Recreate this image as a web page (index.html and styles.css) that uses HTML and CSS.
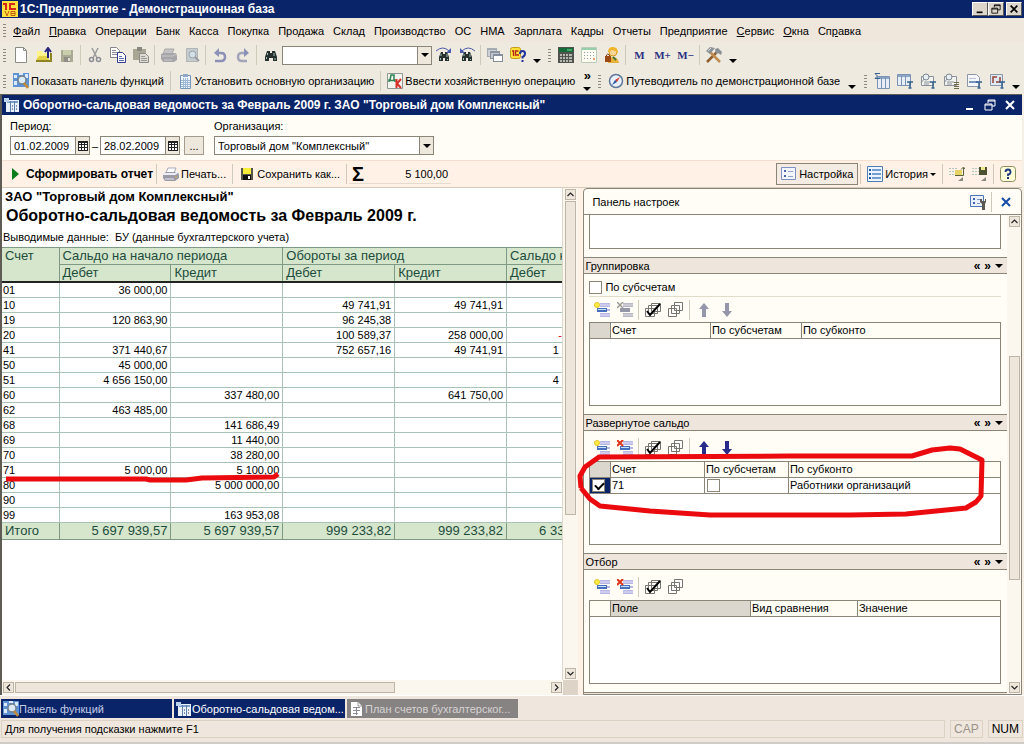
FILE: index.html
```html
<!DOCTYPE html>
<html lang="ru">
<head>
  <meta charset="UTF-8" />
  <meta name="viewport" content="width=device-width, initial-scale=1.0"/>
  <title>1С:Предприятие - Демонстрационная база</title>
  <link rel="stylesheet" href="styles.css">
</head>
<body>
  <!-- icon set -->
  <svg class="sprite" width="0" height="0">
    <symbol id="i-logo" viewBox="0 0 16 16"><rect width="16" height="16" fill="#ffe23c"/><path d="M1 3h3v6M13 3H8v5h6" fill="none" stroke="#d8251c" stroke-width="2"/><path d="M3 10l2 5 2-5M9 10.500h4v4H9zM9 12.500h4" fill="none" stroke="#c05a10"/></symbol>
    <symbol id="i-new" viewBox="0 0 16 16"><path d="M2.500.500h8l3 3v12h-11z" fill="#fff" stroke="#8a8a86"/><path d="M10.500.500v3h3" fill="none" stroke="#8a8a86"/></symbol>
    <symbol id="i-open" viewBox="0 0 16 16"><path d="M1 4h5l1 2h6v7H1z" fill="#fff48c"/><path d="M0 13l3-4h9l1 4z" fill="#e2d04a"/><path d="M0 14h15V6" fill="none" stroke="#8d8422" stroke-width="2"/><path d="M12 11V2M9 5l3-4 3 4" fill="none" stroke="#26267e" stroke-width="2"/></symbol>
    <symbol id="i-save-off" viewBox="0 0 16 16"><path d="M2 3h12v12H2z" fill="#aaa992"/><path d="M4 3h8v5H4z" fill="#c9ceaa"/><path d="M5 10h6v5H5z" fill="#8f8e86"/><path d="M9 11h2v3H9z" fill="#e3e0d3"/></symbol>
    <symbol id="i-save" viewBox="0 0 16 16"><path d="M2 2h12v12H2z" fill="#55554c"/><path d="M4 2h8v6H4z" fill="#f7ee3a"/><path d="M4 9h8v5H4z" fill="#111"/><path d="M9 10h2v3H9z" fill="#fff"/></symbol>
    <symbol id="i-cut" viewBox="0 0 16 16"><path d="M5 1l5 10M11 1L6 11" fill="none" stroke="#9b9b9e" stroke-width="1.500"/><circle cx="4.500" cy="12.500" r="2" fill="none" stroke="#8d8d96" stroke-width="1.500"/><circle cx="11.500" cy="12.500" r="2" fill="none" stroke="#8d8d96" stroke-width="1.500"/></symbol>
    <symbol id="i-copy" viewBox="0 0 16 16"><path d="M.500.500h6l3 3v7h-9z" fill="#fff" stroke="#85858c"/><path d="M2 3.500h4M2 5.500h5M2 7.500h5" stroke="#8a8a94"/><path d="M7.500 5.500h5l3 3v7h-8z" fill="#fff" stroke="#2f3c92"/><path d="M9 9.500h3M9 11.500h5M9 13.500h5" stroke="#5c68b0"/></symbol>
    <symbol id="i-paste" viewBox="0 0 16 16"><path d="M0 2h13v11H0z" fill="#a9a693"/><path d="M4 0h5v4H4z" fill="#888880"/><path d="M6.500 6.500h6l3 3v6h-9z" fill="#dedbd0" stroke="#8b8b8b"/><path d="M8 9.500h4M8 11.500h6M8 13.500h6" stroke="#999"/></symbol>
    <symbol id="i-print-off" viewBox="0 0 16 16"><path d="M4 2h9l-2 5H2z" fill="#c4c4c4" stroke="#aaa"/><path d="M0 7l3-1h12l1 3v4l-3 2H2l-2-3z" fill="#a6a6aa"/><path d="M1 9h11l3-2" stroke="#c9c9cc" fill="none"/><path d="M3 13h8" stroke="#ccc"/></symbol>
    <symbol id="i-print" viewBox="0 0 16 16"><path d="M5 2h8l-2 5H3z" fill="#fff" stroke="#a9a9b8"/><path d="M0 8l3-2h11l2 2v4l-4 3H2l-2-3z" fill="#9b9ba8"/><path d="M0 8h12l3-2" stroke="#ececf4" fill="none" stroke-width="2"/><path d="M2 13h9" stroke="#e8e8ee"/><path d="M12 11h2" stroke="#d4b13b"/></symbol>
    <symbol id="i-preview" viewBox="0 0 16 16"><path d="M2 1h12v14H2z" fill="#c6cbcd"/><path d="M2.500 1.500h11v13h-11z" fill="none" stroke="#b0b5b8"/><circle cx="8.500" cy="7.500" r="3.500" fill="#d2dfe4" stroke="#95a4ad"/><path d="M11 10l4 4" stroke="#9b9ba2" stroke-width="2"/></symbol>
    <symbol id="i-undo" viewBox="0 0 16 16"><path d="M3 14h6q4 0 4-4t-4-4H5" fill="none" stroke="#8d91b7" stroke-width="2.500"/><path d="M7 1v9L2 6z" fill="#8d91b7"/></symbol>
    <symbol id="i-redo" viewBox="0 0 16 16"><path d="M12 14H7q-4 0-4-4t4-4h4" fill="none" stroke="#a3a5ba" stroke-width="2.500"/><path d="M9 1v9l5-4z" fill="#8d91b7"/></symbol>
    <symbol id="i-find" viewBox="0 0 16 16"><path d="M4 4h3v2h2V4h3l2 6v4h-4v-3H8 6v3H2v-4z" fill="#26302e"/><path d="M4.500 6v2M11 6v3M3.500 10v2M12 11v2" stroke="#9fc0b8"/></symbol>
    <symbol id="i-findnext" viewBox="0 0 16 16"><path d="M5 5h2v2h2V5h2l2 5v4H9v-3H7v3H3v-4z" fill="#26302e"/><path d="M5 7v2M11 7v3M4.500 11v2M11.500 12v1" stroke="#9fc0b8"/><path d="M0 4q7-6 13 0" fill="none" stroke="#4a5cab"/><path d="M15 1v5h-5z" fill="#4a5cab"/></symbol>
    <symbol id="i-findprev" viewBox="0 0 16 16"><path d="M5 5h2v2h2V5h2l2 5v4H9v-3H7v3H3v-4z" fill="#26302e"/><path d="M5 7v2M11 7v3M4.500 11v2M11.500 12v1" stroke="#9fc0b8"/><path d="M3 4q6-6 13 0" fill="none" stroke="#4a5cab"/><path d="M1 1v5h5z" fill="#4a5cab"/></symbol>
    <symbol id="i-windows" viewBox="0 0 16 16"><path d="M0 1h10v9H0z" fill="#a5abb3"/><path d="M1 3h8v6H1z" fill="#cdd1d6"/><path d="M3 4h10v8H3z" fill="#8d949f"/><path d="M4 6h8v5H4z" fill="#c3c8ce"/><path d="M6 7h10v8H6z" fill="#858e9c"/><path d="M7 9h8v5H7z" fill="#fff"/></symbol>
    <symbol id="i-help1c" viewBox="0 0 16 16"><rect x=".5" y=".5" width="10" height="11" rx="2" fill="#ffdf3a" stroke="#c59c16"/><path d="M2 4h1.500v5M8.500 4H5.500v4H9" fill="none" stroke="#b4281a" stroke-width="1.300"/><path d="M10 7q0-3 2.500-3T15 6.500 12.500 10v1.500" fill="none" stroke="#20319b" stroke-width="2"/><path d="M11.500 13h2v2h-2z" fill="#20319b"/></symbol>
    <symbol id="i-calc" viewBox="0 0 16 16"><path d="M0 0h16v16H0z" fill="#50534d"/><path d="M1 1h14v4H1z" fill="#146b3a"/><path d="M9 3h5" stroke="#79e08d"/><path d="M2 7h2v2H2zM5 7h2v2H5zM8 7h2v2H8zM11 7h3v2h-3zM2 10h2v2H2zM5 10h2v2H5zM8 10h2v2H8zM11 10h3v2h-3zM2 13h2v2H2zM5 13h2v2H5zM8 13h2v2H8zM11 13h3v2h-3z" fill="#b4b7ae"/></symbol>
    <symbol id="i-cal" viewBox="0 0 16 16"><path d="M.500.500h15v15H.500z" fill="#fffef2" stroke="#b9cbb9"/><path d="M1 2h14" stroke="#97cda9" stroke-width="2"/><path d="M3 5.500h11M3 8.500h11M3 11.500h11" stroke="#8d9cab" stroke-dasharray="1 2"/><path d="M12 11h2v2h-2z" fill="#e9a56c"/></symbol>
    <symbol id="i-user" viewBox="0 0 16 16"><circle cx="9" cy="5" r="4" fill="#f5d69b" stroke="#d99a1a"/><path d="M4 5q0-5 5-5t5 6q-3-3-6-3-2 2-4 2z" fill="#f1b52b"/><path d="M4 16q0-6 5-6t6 6z" fill="#e8b23a"/><path d="M2.500 9V8q1-2 3 0v1" fill="none" stroke="#7c3a10"/><path d="M1 9h6v6H1z" fill="#9c4915"/><path d="M9 10l3 3" stroke="#48793a" stroke-width="2"/></symbol>
    <symbol id="i-tools" viewBox="0 0 16 16"><path d="M1 15L11 5" stroke="#8f5e2e" stroke-width="2.500"/><path d="M9 2l3-1 4 4-1 3-3-2-2 1z" fill="#8a8f96"/><path d="M4 5l10 10" stroke="#c08b4e" stroke-width="2.500"/><path d="M0 4l4-4 5 1-5 6z" fill="#8b9197"/><path d="M2 4l3-3" stroke="#dfe2e4"/></symbol>
    <symbol id="i-panel" viewBox="0 0 16 16"><path d="M0 0h16v14H0z" fill="#5f93d6"/><path d="M1 2h3v3H1zM1 8h3v4H1zM12 1h3v4h-3zM6 0h4v2H6z" fill="#dcebfb"/><circle cx="9" cy="7" r="4" fill="#dbeaf5" stroke="#72808b" stroke-width="1.500"/><path d="M11 10l4 5" stroke="#c18a35" stroke-width="2.500"/></symbol>
    <symbol id="i-org" viewBox="0 0 16 16"><path d="M3.500 2.500h10v13h-10z" fill="#eef4fb" stroke="#7795b8"/><path d="M6 1h5v3H6z" fill="#8ea8c6"/><path d="M6.500 5v10M8.500 5v10M10.500 5v10M4 7.500h9M4 9.500h9M4 11.500h9M4 13.500h9" stroke="#9db8d6"/></symbol>
    <symbol id="i-dk" viewBox="0 0 16 16"><path d="M.500.500h15v15H.500z" fill="#f5f4ef" stroke="#8e9895"/><path d="M2 9V7h1l1-5h3v5h1v2M2 7.500h6" fill="none" stroke="#2c8254" stroke-width="1.500"/><path d="M9.500 6v9M14 6l-4 4.500 4 4.500" fill="none" stroke="#d7322a" stroke-width="2"/></symbol>
    <symbol id="i-compass" viewBox="0 0 16 16"><circle cx="8" cy="8" r="6.500" fill="#eaf1fa" stroke="#60789d" stroke-width="1.500"/><path d="M12 4L9 9 7 7z" fill="#d33c2c"/><path d="M4 12l3-5 2 2z" fill="#2a58a8"/></symbol>
    <symbol id="i-rep" viewBox="0 0 16 16"><path d="M3.500 3.500h12v12h-12z" fill="#e7eef6" stroke="#7b93b0"/><path d="M4 5h11" stroke="#8ba7c9" stroke-width="2"/><path d="M7.500 4v11M11.500 4v11" stroke="#7b93b0"/><path d="M6 .500H1L3.500 3 1 5.500h5" fill="none" stroke="#35608f"/></symbol>
    <symbol id="i-rept" viewBox="0 0 16 16"><path d="M.500 1.500h13v11H.500z" fill="#e7eef6" stroke="#7b93b0"/><path d="M1 3h12" stroke="#8ba7c9" stroke-width="2"/><path d="M4.500 3v9M8.500 3v9" stroke="#7b93b0"/><path d="M10 9h6M13 9v6M11.500 15h3" fill="none" stroke="#35608f" stroke-width="1.500"/></symbol>
    <symbol id="i-docq" viewBox="0 0 16 16"><path d="M1.500 3.500h12v9h-12z" fill="#f3f3ef" stroke="#8b929b"/><circle cx="6" cy="4" r="3" fill="#e8eef2" stroke="#7e8791"/><path d="M4 6l-3 4M4 9h7M4 11h5" stroke="#8b929b"/><path d="M10 9h6M13 9v6M11.500 15h3" fill="none" stroke="#35608f" stroke-width="1.500"/></symbol>
    <symbol id="i-docl" viewBox="0 0 16 16"><path d="M1.500 3.500h12v9h-12z" fill="#f3f3ef" stroke="#8b929b"/><circle cx="6" cy="4" r="3" fill="#e8eef2" stroke="#7e8791"/><path d="M4 6l-3 4M4 9h7M4 11h5" stroke="#8b929b"/><path d="M11 9.500h5M11 11.500h5M11 13.500h5M11 15.500h5" stroke="#6c6c4c"/></symbol>
    <symbol id="i-doct" viewBox="0 0 16 16"><path d="M1.500 1.500h9l3 3v9h-12z" fill="#f5f7fa" stroke="#8b96a6"/><path d="M3 9h9" stroke="#7694bd" stroke-width="2"/><path d="M3 5.500h7" stroke="#b7c4d4"/><path d="M10 9h6M13 9v6M11.500 15h3" fill="none" stroke="#35608f" stroke-width="1.500"/></symbol>
    <symbol id="i-docr" viewBox="0 0 16 16"><path d="M1.500 1.500h12v11h-12z" fill="#dfe9f4" stroke="#8b96a6"/><path d="M4 10V4h4M11 4v5H7" fill="none" stroke="#9a4133" stroke-width="1.500"/><path d="M10 9h6M13 9v6M11.500 15h3" fill="none" stroke="#35608f" stroke-width="1.500"/></symbol>
    <symbol id="i-sheet" viewBox="0 0 16 16"><path d="M2 3h13v12H2z" fill="#eaf1fa"/><path d="M3 5h11" stroke="#7ba0d0" stroke-width="2"/><path d="M6.500 4v11M10.500 4v11" stroke="#5d7fae"/><path d="M0 1h5v4H0z" fill="#bcd3ee"/><path d="M8 9h1M12 9h1M8 12h1M12 12h1" stroke="#1c2f60"/></symbol>
    <symbol id="i-doc" viewBox="0 0 16 16"><path d="M2 1h7l4 4v10H2z" fill="#fff"/><path d="M4 6.500h7M4 9.500h7M4 12.500h5M7.500 6v8" stroke="#8d8d98"/><path d="M9 1v4h4" fill="none" stroke="#999"/></symbol>
    <symbol id="i-form" viewBox="0 0 16 16"><path d="M.500 1.500h14v12H.500z" fill="#f3f6ff" stroke="#7e90c4"/><path d="M3 4h2v2H3zM3 9h2v2H3z" fill="#4c64ae"/><path d="M7 5.500h5M7 10.500h5" stroke="#93a2cc"/></symbol>
    <symbol id="i-history" viewBox="0 0 16 16"><path d="M.500.500h15v15H.500z" fill="#edf5ff" stroke="#4e7cb4"/><path d="M2 4h2M2 8h2M2 12h2" stroke="#205a9e" stroke-width="2"/><path d="M5 4h9M5 8h9M5 12h9" stroke="#4c83bf" stroke-width="1.500"/></symbol>
    <symbol id="i-load" viewBox="0 0 16 16"><path d="M0 2.500h8M0 5.500h8M0 8.500h8" stroke="#b3c6c0" stroke-dasharray="2 1"/><path d="M6 4h7v5H6z" fill="#e5d463"/><path d="M6 9.500h8.500V2M12 3.500L14.500 1 16 3" fill="none" stroke="#57603a"/><path d="M14 11v4h-5z" fill="#8a877c"/></symbol>
    <symbol id="i-store" viewBox="0 0 16 16"><path d="M0 2.500h8M0 5.500h8M0 8.500h8" stroke="#b3c6c0" stroke-dasharray="2 1"/><path d="M7 1h8v8H7z" fill="#4f5230"/><path d="M9 1h4v3H9z" fill="#eee98d"/><path d="M14 11v4h-5z" fill="#8a877c"/></symbol>
    <symbol id="i-q" viewBox="0 0 16 16"><rect x=".5" y=".5" width="15" height="15" rx="3" fill="#ffffd9" stroke="#8c8a60"/><path d="M5.500 6q0-2.500 2.500-2.500T10.500 6 8 8.500V10" fill="none" stroke="#1f3a7e" stroke-width="1.800"/><path d="M7 11h2v2H7z" fill="#1f3a7e"/></symbol>
    <symbol id="i-add" viewBox="0 0 16 16"><path d="M6 1h10v4H6zM6 11h10v4H6z" fill="#b6b5e4"/><path d="M6 3h10M6 13h10" stroke="#e4e3f8"/><path d="M3 6h10v4H3z" fill="#466fbe"/><path d="M4 7.500h8" stroke="#c8e2f7"/><path d="M13 7h3v2h-3z" fill="#b6b5e4"/><circle cx="3" cy="3" r="2.500" fill="#ffee43" stroke="#e6c22c"/></symbol>
    <symbol id="i-del" viewBox="0 0 16 16"><path d="M6 1h10v4H6zM6 11h10v4H6z" fill="#b6b5e4"/><path d="M6 3h10M6 13h10" stroke="#e4e3f8"/><path d="M3 6h10v4H3z" fill="#466fbe"/><path d="M4 7.500h8" stroke="#c8e2f7"/><path d="M13 7h3v2h-3z" fill="#b6b5e4"/><path d="M0 0l6 6M6 0L0 6" stroke="#de3417" stroke-width="2"/></symbol>
    <symbol id="i-del-off" viewBox="0 0 16 16"><path d="M6 1h10v4H6zM6 11h10v4H6z" fill="#b8b7c4"/><path d="M6 3h10M6 13h10" stroke="#dedde2"/><path d="M3 6h10v4H3z" fill="#9797aa"/><path d="M0 0l6 6M6 0L0 6" stroke="#9b9a93" stroke-width="1.500"/></symbol>
    <symbol id="i-checkall" viewBox="0 0 16 16"><path d="M6.500 1.500h9v8h-9zM3.500 3.500h9v8h-9zM.500 6.500h9v8h-9z" fill="#fff" stroke="#77756c"/><path d="M2 9l3 4L15 2" fill="none" stroke="#000" stroke-width="2"/></symbol>
    <symbol id="i-uncheck" viewBox="0 0 16 16"><path d="M6.500.500h8v8h-8zM3.500 3.500h8v8h-8zM.500 6.500h8v8h-8z" fill="#fff" stroke="#77756c"/></symbol>
    <symbol id="i-up" viewBox="0 0 16 16"><path d="M8 1l5 6h-3v8H6V7H3z" fill="currentColor"/></symbol>
    <symbol id="i-down" viewBox="0 0 16 16"><path d="M8 15l5-6h-3V1H6v8H3z" fill="currentColor"/></symbol>
    <symbol id="i-setup" viewBox="0 0 16 16"><path d="M.500 1.500h13v11H.500z" fill="#eaf0fc" stroke="#4d76b8"/><path d="M3 4h2v2H3zM3 8h2v2H3z" fill="#3d63ae"/><path d="M7 5.500h4M7 9.500h3" stroke="#7d97c8"/><path d="M10 5v3l2 2v6h3v-6l1-2V5h-1v2h-3V5z" fill="#5b5b55"/></symbol>
    <symbol id="i-pick" viewBox="0 0 10 10"><path d="M0 0h10v10H0z" fill="#222"/><path d="M1 2h2v1H1zM4 2h2v1H4zM7 2h2v1H7zM1 4h2v2H1zM4 4h2v2H4zM7 4h2v2H7zM1 7h2v2H1zM4 7h2v2H4zM7 7h2v2H7z" fill="#fff"/></symbol>
    <symbol id="i-min" viewBox="0 0 12 12"><path d="M2 9h7v2H2z" fill="currentColor"/></symbol>
    <symbol id="i-restore" viewBox="0 0 12 12"><path d="M4 4V1h7v6H8M4 2h7M1 5h7v6H1zM1 6h7" fill="none" stroke="currentColor"/></symbol>
    <symbol id="i-close" viewBox="0 0 12 12"><path d="M2 2l8 8M10 2l-8 8" stroke="currentColor" stroke-width="2"/></symbol>
    <symbol id="i-chev" viewBox="0 0 12 12"><path d="M2 8l4-4 4 4" fill="none" stroke="#222" stroke-width="1.500"/></symbol>
  </svg>

  <header class="titlebar">
    <svg class="icon"><use href="#i-logo"/></svg>
    <h1>1С:Предприятие - Демонстрационная база</h1>
    <div class="win-buttons raised">
      <button aria-label="Свернуть"><svg><use href="#i-min"/></svg></button>
      <button aria-label="Восстановить"><svg><use href="#i-restore"/></svg></button>
      <button aria-label="Закрыть"><svg><use href="#i-close"/></svg></button>
    </div>
  </header>

  <nav class="menubar">
    <span class="grip"></span>
    <button><u>Ф</u>айл</button>
    <button><u>П</u>равка</button>
    <button>Операции</button>
    <button>Банк</button>
    <button>Касса</button>
    <button>Покупка</button>
    <button>Продажа</button>
    <button>Склад</button>
    <button>Производство</button>
    <button>ОС</button>
    <button>НМА</button>
    <button>Зарплата</button>
    <button>Кадры</button>
    <button>Отчеты</button>
    <button>Предприятие</button>
    <button><u>С</u>ервис</button>
    <button><u>О</u>кна</button>
    <button>Сп<u>р</u>авка</button>
  </nav>

  <div class="toolbar">
    <span class="grip"></span>
    <button class="tool" aria-label="Новый"><svg class="icon"><use href="#i-new"/></svg></button>
    <button class="tool" aria-label="Открыть"><svg class="icon"><use href="#i-open"/></svg></button>
    <button class="tool" aria-label="Сохранить"><svg class="icon"><use href="#i-save-off"/></svg></button>
    <span class="sep"></span>
    <button class="tool" aria-label="Вырезать"><svg class="icon"><use href="#i-cut"/></svg></button>
    <button class="tool" aria-label="Копировать"><svg class="icon"><use href="#i-copy"/></svg></button>
    <button class="tool" aria-label="Вставить"><svg class="icon"><use href="#i-paste"/></svg></button>
    <span class="sep"></span>
    <button class="tool" aria-label="Печать"><svg class="icon"><use href="#i-print-off"/></svg></button>
    <button class="tool" aria-label="Просмотр"><svg class="icon"><use href="#i-preview"/></svg></button>
    <span class="sep"></span>
    <button class="tool" aria-label="Отменить"><svg class="icon"><use href="#i-undo"/></svg></button>
    <button class="tool" aria-label="Вернуть"><svg class="icon"><use href="#i-redo"/></svg></button>
    <span class="sep"></span>
    <button class="tool" aria-label="Найти"><svg class="icon"><use href="#i-find"/></svg></button>
    <div class="field search">
      <input type="text" aria-label="Строка поиска">
      <button aria-label="Выбрать"><span class="arrow"></span></button>
    </div>
    <button class="tool" aria-label="Найти следующий"><svg class="icon"><use href="#i-findnext"/></svg></button>
    <button class="tool" aria-label="Найти предыдущий"><svg class="icon"><use href="#i-findprev"/></svg></button>
    <span class="sep"></span>
    <button class="tool" aria-label="Окна"><svg class="icon"><use href="#i-windows"/></svg></button>
    <button class="tool" aria-label="Справка"><svg class="icon"><use href="#i-help1c"/></svg></button>
    <button class="more" aria-label="Еще"><span class="arrow"></span></button>
    <span class="grip"></span>
    <button class="tool" aria-label="Калькулятор"><svg class="icon"><use href="#i-calc"/></svg></button>
    <button class="tool" aria-label="Календарь"><svg class="icon"><use href="#i-cal"/></svg></button>
    <button class="tool" aria-label="Пользователь"><svg class="icon"><use href="#i-user"/></svg></button>
    <span class="sep"></span>
    <button class="tool memory">M</button>
    <button class="tool memory">M+</button>
    <button class="tool memory">M−</button>
    <span class="sep"></span>
    <button class="tool" aria-label="Настройка"><svg class="icon"><use href="#i-tools"/></svg></button>
    <button class="more" aria-label="Еще"><span class="arrow"></span></button>
  </div>

  <div class="toolbar">
    <span class="grip"></span>
    <button class="text-tool"><svg class="icon"><use href="#i-panel"/></svg>Показать панель функций</button>
    <span class="sep"></span>
    <button class="text-tool"><svg class="icon"><use href="#i-org"/></svg>Установить основную организацию</button>
    <span class="sep"></span>
    <button class="text-tool"><svg class="icon"><use href="#i-dk"/></svg>Ввести хозяйственную операцию</button>
    <button class="more double" aria-label="Еще"><b>»</b><span class="arrow"></span></button>
    <span class="grip"></span>
    <button class="text-tool"><svg class="icon"><use href="#i-compass"/></svg>Путеводитель по демонстрационной базе</button>
    <button class="more" aria-label="Еще"><span class="arrow"></span></button>
    <div class="reports">
      <span class="grip"></span>
      <button class="tool" aria-label="Оборотно-сальдовая ведомость"><svg class="icon"><use href="#i-rep"/></svg></button>
      <button class="tool" aria-label="Ведомость по счету"><svg class="icon"><use href="#i-rept"/></svg></button>
      <button class="tool" aria-label="Анализ счета"><svg class="icon"><use href="#i-docq"/></svg></button>
      <button class="tool" aria-label="Анализ субконто"><svg class="icon"><use href="#i-docl"/></svg></button>
      <button class="tool" aria-label="Карточка счета"><svg class="icon"><use href="#i-doct"/></svg></button>
      <button class="tool" aria-label="Обороты счета"><svg class="icon"><use href="#i-docr"/></svg></button>
      <button class="more" aria-label="Еще"><span class="arrow"></span></button>
    </div>
  </div>

  <main class="window">
    <div class="window-title">
      <svg class="icon"><use href="#i-sheet"/></svg>
      <h2>Оборотно-сальдовая ведомость за Февраль 2009 г. ЗАО "Торговый дом Комплексный"</h2>
      <div class="win-buttons">
        <button aria-label="Свернуть"><svg><use href="#i-min"/></svg></button>
        <button aria-label="Восстановить"><svg><use href="#i-restore"/></svg></button>
        <button aria-label="Закрыть"><svg><use href="#i-close"/></svg></button>
      </div>
    </div>

    <form class="params">
      <div class="param">
        <label for="dateFrom">Период:</label>
        <div class="row">
          <div class="field date"><input type="text" id="dateFrom" value="01.02.2009"><button type="button" aria-label="Выбрать дату"><svg><use href="#i-pick"/></svg></button></div>
          <span class="dash">–</span>
          <div class="field date"><input type="text" aria-label="Конец периода" value="28.02.2009"><button type="button" aria-label="Выбрать дату"><svg><use href="#i-pick"/></svg></button></div>
          <button type="button" class="dots">...</button>
        </div>
      </div>
      <div class="param">
        <label for="org">Организация:</label>
        <div class="field org">
          <select id="org"><option>Торговый дом "Комплексный"</option></select>
          <span class="drop"><span class="arrow"></span></span>
        </div>
      </div>
    </form>

    <div class="actions">
      <button class="run"><span class="play"></span>Сформировать отчет</button>
      <span class="sep"></span>
      <button class="text-tool"><svg class="icon"><use href="#i-print"/></svg>Печать...</button>
      <span class="sep"></span>
      <button class="text-tool"><svg class="icon"><use href="#i-save"/></svg>Сохранить как...</button>
      <span class="sep"></span>
      <div class="sum"><b>Σ</b><output>5 100,00</output></div>
      <div class="actions-right">
        <button class="text-tool pressed"><svg class="icon"><use href="#i-form"/></svg>Настройка</button>
        <span class="sep"></span>
        <button class="text-tool"><svg class="icon"><use href="#i-history"/></svg>История<span class="arrow small"></span></button>
        <span class="sep"></span>
        <button class="tool" aria-label="Загрузить настройки"><svg class="icon"><use href="#i-load"/></svg></button>
        <button class="tool" aria-label="Сохранить настройки"><svg class="icon"><use href="#i-store"/></svg></button>
        <span class="sep"></span>
        <button class="tool" aria-label="Справка"><svg class="icon"><use href="#i-q"/></svg></button>
      </div>
    </div>

    <div class="content">
      <section class="report">
        <div class="report-view">
          <p class="org-name">ЗАО "Торговый дом Комплексный"</p>
          <h3>Оборотно-сальдовая ведомость за Февраль 2009 г.</h3>
          <p class="report-info">Выводимые данные:&nbsp; БУ (данные бухгалтерского учета)</p>
          <table class="sheet">
            <colgroup><col class="c-acc"><col><col><col><col><col></colgroup>
            <thead>
              <tr><th rowspan="2">Счет</th><th colspan="2">Сальдо на начало периода</th><th colspan="2">Обороты за период</th><th>Сальдо на конец</th></tr>
              <tr><th>Дебет</th><th>Кредит</th><th>Дебет</th><th>Кредит</th><th>Дебет</th></tr>
            </thead>
            <tbody>
              <tr><td>01</td><td>36 000,00</td><td></td><td></td><td></td><td></td></tr>
              <tr><td>10</td><td></td><td></td><td>49 741,91</td><td>49 741,91</td><td></td></tr>
              <tr><td>19</td><td>120 863,90</td><td></td><td>96 245,38</td><td></td><td></td></tr>
              <tr><td>20</td><td></td><td></td><td>100 589,37</td><td>258 000,00</td><td class="minus">-157 410,63</td></tr>
              <tr><td>41</td><td>371 440,67</td><td></td><td>752 657,16</td><td>49 741,91</td><td>1 074 355,92</td></tr>
              <tr><td>50</td><td>45 000,00</td><td></td><td></td><td></td><td></td></tr>
              <tr><td>51</td><td>4 656 150,00</td><td></td><td></td><td></td><td>4 656 150,00</td></tr>
              <tr><td>60</td><td></td><td>337 480,00</td><td></td><td>641 750,00</td><td></td></tr>
              <tr><td>62</td><td>463 485,00</td><td></td><td></td><td></td><td></td></tr>
              <tr><td>68</td><td></td><td>141 686,49</td><td></td><td></td><td></td></tr>
              <tr><td>69</td><td></td><td>11 440,00</td><td></td><td></td><td></td></tr>
              <tr><td>70</td><td></td><td>38 280,00</td><td></td><td></td><td></td></tr>
              <tr><td>71</td><td>5 000,00</td><td>5 100,00</td><td></td><td></td><td></td></tr>
              <tr><td>80</td><td></td><td>5 000 000,00</td><td></td><td></td><td></td></tr>
              <tr><td>90</td><td></td><td></td><td></td><td></td><td></td></tr>
              <tr><td>99</td><td></td><td>163 953,08</td><td></td><td></td><td></td></tr>
            </tbody>
            <tfoot>
              <tr><td>Итого</td><td>5 697 939,57</td><td>5 697 939,57</td><td>999 233,82</td><td>999 233,82</td><td>6 339 689,57</td></tr>
            </tfoot>
          </table>
        </div>
        <div class="scroll vertical report-v">
          <button aria-label="Вверх"><svg><use href="#i-chev"/></svg></button>
          <span class="thumb"></span>
          <button class="end down" aria-label="Вниз"><svg><use href="#i-chev"/></svg></button>
        </div>
        <div class="scroll horizontal">
          <button class="left" aria-label="Влево"><svg><use href="#i-chev"/></svg></button>
          <span class="thumb"></span>
          <button class="end right" aria-label="Вправо"><svg><use href="#i-chev"/></svg></button>
        </div>
        <span class="corner"></span>
      </section>

      <aside class="settings">
        <div class="settings-head">
          <h3>Панель настроек</h3>
          <button class="tool" aria-label="Настроить"><svg class="icon"><use href="#i-setup"/></svg></button>
          <span class="sep"></span>
          <button class="tool blue" aria-label="Закрыть панель"><svg width="12" height="12"><use href="#i-close"/></svg></button>
        </div>
        <div class="settings-body">
          <div class="sections">
            <div class="list-stub"></div>

            <div class="section-head"><h4>Группировка</h4><span class="section-nav"><b>«</b><b>»</b><span class="arrow"></span></span></div>
            <label class="check-line"><input type="checkbox">По субсчетам</label>
            <div class="mini-tools">
              <button class="tool" aria-label="Добавить"><svg class="icon"><use href="#i-add"/></svg></button>
              <button class="tool" aria-label="Удалить"><svg class="icon"><use href="#i-del-off"/></svg></button>
              <span class="sep"></span>
              <button class="tool" aria-label="Отметить все"><svg class="icon"><use href="#i-checkall"/></svg></button>
              <button class="tool" aria-label="Снять отметки"><svg class="icon"><use href="#i-uncheck"/></svg></button>
              <span class="sep"></span>
              <button class="tool muted" aria-label="Выше"><svg class="icon"><use href="#i-up"/></svg></button>
              <button class="tool muted" aria-label="Ниже"><svg class="icon"><use href="#i-down"/></svg></button>
            </div>
            <div class="list">
              <table>
                <colgroup><col class="w-mark"><col class="w-100"><col class="w-91"><col></colgroup>
                <tr><th class="current"></th><th>Счет</th><th>По субсчетам</th><th>По субконто</th></tr>
              </table>
            </div>

            <div class="section-head"><h4>Развернутое сальдо</h4><span class="section-nav"><b>«</b><b>»</b><span class="arrow"></span></span></div>
            <div class="mini-tools spaced">
              <button class="tool" aria-label="Добавить"><svg class="icon"><use href="#i-add"/></svg></button>
              <button class="tool" aria-label="Удалить"><svg class="icon"><use href="#i-del"/></svg></button>
              <span class="sep"></span>
              <button class="tool" aria-label="Отметить все"><svg class="icon"><use href="#i-checkall"/></svg></button>
              <button class="tool" aria-label="Снять отметки"><svg class="icon"><use href="#i-uncheck"/></svg></button>
              <span class="sep"></span>
              <button class="tool navy" aria-label="Выше"><svg class="icon"><use href="#i-up"/></svg></button>
              <button class="tool navy" aria-label="Ниже"><svg class="icon"><use href="#i-down"/></svg></button>
            </div>
            <div class="list">
              <table>
                <colgroup><col class="w-mark"><col class="w-94"><col class="w-84"><col></colgroup>
                <tr><th class="current"></th><th>Счет</th><th>По субсчетам</th><th>По субконто</th></tr>
                <tr><td class="selected"><input type="checkbox" aria-label="Использовать" checked></td><td>71</td><td><input type="checkbox" aria-label="По субсчетам"></td><td>Работники организаций</td></tr>
              </table>
            </div>

            <div class="section-head"><h4>Отбор</h4><span class="section-nav"><b>«</b><b>»</b><span class="arrow"></span></span></div>
            <div class="mini-tools spaced">
              <button class="tool" aria-label="Добавить"><svg class="icon"><use href="#i-add"/></svg></button>
              <button class="tool" aria-label="Удалить"><svg class="icon"><use href="#i-del"/></svg></button>
              <span class="sep"></span>
              <button class="tool" aria-label="Отметить все"><svg class="icon"><use href="#i-checkall"/></svg></button>
              <button class="tool" aria-label="Снять отметки"><svg class="icon"><use href="#i-uncheck"/></svg></button>
            </div>
            <div class="list">
              <table>
                <colgroup><col class="w-mark"><col class="w-140"><col class="w-107"><col></colgroup>
                <tr><th></th><th class="current">Поле</th><th>Вид сравнения</th><th>Значение</th></tr>
              </table>
            </div>
            <div class="section-head"></div>
          </div>
          <div class="scroll vertical settings-v">
            <button aria-label="Вверх"><svg><use href="#i-chev"/></svg></button>
            <span class="thumb"></span>
            <button class="end down" aria-label="Вниз"><svg><use href="#i-chev"/></svg></button>
          </div>
        </div>
      </aside>
    </div>
  </main>

  <div class="taskbar">
    <button><svg class="icon"><use href="#i-panel"/></svg><span>Панель функций</span></button>
    <button class="active"><svg class="icon"><use href="#i-sheet"/></svg><span>Оборотно-сальдовая ведом...</span></button>
    <button class="inactive"><svg class="icon"><use href="#i-doc"/></svg><span>План счетов бухгалтерског...</span></button>
  </div>

  <footer class="statusbar">
    <span class="hint">Для получения подсказки нажмите F1</span>
    <span class="key off">CAP</span>
    <span class="key">NUM</span>
  </footer>

  <!-- red pen marks -->
  <svg class="marks" width="1024" height="744" viewBox="0 0 1024 744">
    <path d="M6 479H146L150 480H186L202 478L274 477L278 474"/>
    <path d="M581 488L580 476L585 467L599 457L790 456H912L932 450L950 448L960 449L982 460L981 496L976 502L966 508L906 514L850 515H710L650 511L600 506L590 499L581 488"/>
  </svg>
</body>
</html>
```

FILE: styles.css
```css
* {
  box-sizing: border-box;
}

html, body {
  height: 100%;
  margin: 0;
}

body {
  display: flex;
  flex-direction: column;
  overflow: hidden;
  font-family: "Liberation Sans", Arial, sans-serif;
  font-size: 11px;
  line-height: 14px;
  color: #000;
  background: #efe7dd;
}

h1, h2, h3, h4, p {
  margin: 0;
}

button, input, select {
  font: inherit;
  color: inherit;
  border: 0;
  padding: 0;
  margin: 0;
  background: none;
  border-radius: 0;
}

button {
  white-space: nowrap;
}

svg {
  display: block;
  flex: none;
}

.sprite {
  position: absolute;
}

.icon {
  width: 16px;
  height: 16px;
}

.arrow {
  flex: none;
  width: 0;
  height: 0;
  border: 4px solid transparent;
  border-top-color: #000;
  border-bottom: 0;
}

.arrow.small {
  border-width: 3px;
  border-bottom: 0;
}

.grip {
  flex: none;
  width: 3px;
  height: 13px;
  margin: 0 3px;
  background: repeating-linear-gradient(#8f897f 0 1px, transparent 1px 3px);
}

.sep {
  flex: none;
  width: 1px;
  height: 20px;
  margin: 0 2px;
  background: #cfc9ba;
}

/* main title */
.titlebar, .window-title {
  display: flex;
  align-items: center;
  flex: none;
  gap: 2px;
  height: 18px;
  padding: 0 2px;
  background: #0a246a;
  color: #fff;
}

.titlebar h1, .window-title h2 {
  flex: 1;
  font-size: 12px;
  font-weight: bold;
  line-height: 16px;
  white-space: nowrap;
}

.win-buttons {
  display: flex;
}

.win-buttons button {
  display: flex;
  align-items: center;
  justify-content: center;
  width: 20px;
  height: 14px;
}

.win-buttons svg {
  width: 12px;
  height: 12px;
}

.raised button {
  width: 16px;
  background: #dcd6cb;
  color: #000;
  border: 1px solid;
  border-color: #fff #555 #555 #fff;
}

.raised button:last-child {
  margin-left: 2px;
}

.raised svg {
  width: 10px;
  height: 10px;
}

/* menu and toolbars */
.menubar {
  display: flex;
  align-items: center;
  flex: none;
  height: 24px;
  padding-top: 1px;
  background: #efe6dc;
}

.menubar button {
  padding: 0 5px 0 4px;
}

.toolbar {
  display: flex;
  align-items: center;
  flex: none;
  height: 26px;
  background: #eeeadf;
}

.tool {
  display: flex;
  align-items: center;
  justify-content: center;
  flex: none;
  width: 23px;
  height: 22px;
}

.memory {
  font-family: "Liberation Serif", serif;
  font-weight: bold;
  color: #2b2f83;
}

.text-tool {
  display: flex;
  align-items: center;
  flex: none;
  gap: 2px;
  height: 22px;
  padding: 0 4px;
}

.more {
  display: flex;
  flex-direction: column;
  align-items: center;
  justify-content: flex-end;
  flex: none;
  width: 16px;
  height: 16px;
}

.more.double {
  justify-content: space-between;
  height: 20px;
  font-size: 13px;
  line-height: 10px;
}

.reports {
  display: flex;
  align-items: center;
  margin-left: auto;
}

.field {
  display: flex;
  flex: none;
  height: 19px;
  border: 1px solid #8b8578;
  background: #fff;
}

.field input {
  flex: 1;
  min-width: 0;
  padding: 0 3px;
}

.field button, .drop {
  display: flex;
  align-items: center;
  justify-content: center;
  width: 14px;
  background: #eee7dc;
  border-left: 1px solid #8b8578;
}

.search {
  width: 150px;
}

/* report window */
.window {
  display: flex;
  flex-direction: column;
  flex: 1;
  min-height: 0;
  border-left: 2px solid #5f5b55;
  border-right: 2px solid #f5efe6;
  background: #fffdf6;
}

.window-title {
  height: 21px;
  border-top: 1px solid #5f5b55;
}

.window-title h2 {
  padding-left: 1px;
}

.window-title button {
  height: 16px;
}

.params {
  display: flex;
  flex: none;
  gap: 10px;
  height: 45px;
  padding: 4px 8px 0;
}

.param label {
  display: block;
  margin-bottom: 3px;
}

.row {
  display: flex;
  align-items: center;
}

.date {
  width: 80px;
}

.date svg {
  width: 10px;
  height: 10px;
}

.dash {
  width: 10px;
  text-align: center;
}

.dots {
  width: 20px;
  height: 19px;
  margin-left: 4px;
  border: 1px solid #a39c8f;
  background: #eee7dc;
}

.org {
  width: 220px;
}

.org select {
  flex: 1;
  appearance: none;
  padding: 0 3px;
}

.actions {
  display: flex;
  align-items: center;
  flex: none;
  height: 28px;
  border-top: 1px solid #f5dfd0;
  border-bottom: 1px solid #d8cdbd;
  background: #fff1e6;
}

.run {
  display: flex;
  align-items: center;
  gap: 7px;
  padding: 0 1px 0 10px;
  font-size: 12px;
  font-weight: bold;
}

.play {
  border: 6px solid transparent;
  border-left: 7px solid #0b7d1c;
  border-right: 0;
}

.sum {
  display: flex;
  align-items: center;
  justify-content: space-between;
  width: 102px;
  height: 20px;
  padding: 0 3px;
  border-bottom: 1px solid #e5dace;
}

.sum b {
  font-size: 20px;
}

.actions-right {
  display: flex;
  align-items: center;
  margin-left: auto;
  padding-right: 3px;
}

.pressed {
  border: 1px solid #8b8578;
  background: #f4ece2;
}

.content {
  display: flex;
  flex: 1;
  gap: 5px;
  min-height: 0;
  background: #fff1e6;
}

.report {
  display: grid;
  flex: 1;
  grid-template-columns: 1fr 15px;
  grid-template-rows: 1fr 15px;
  min-width: 0;
}

.report-view {
  overflow: hidden;
  background: #fff;
  border-right: 1px solid #ddd8cc;
}

.org-name {
  padding: 1px 3px 0;
  font-size: 13px;
  font-weight: bold;
  line-height: 16px;
}

.report h3 {
  padding-left: 4px;
  font-size: 16px;
  line-height: 22px;
}

.report-info {
  padding: 3px 1px;
  line-height: 14px;
}

/* account sheet */
.sheet {
  width: 617px;
  table-layout: fixed;
  border-collapse: collapse;
}

.c-acc {
  width: 57px;
}

.sheet th, .sheet td {
  padding: 0 3px;
  white-space: nowrap;
  overflow: hidden;
}

.sheet th, .sheet tfoot td {
  height: 17px;
  font-size: 13px;
  font-weight: normal;
  line-height: 16px;
  color: #1d4c3c;
  background: #d5e6cc;
  border: 1px solid #7f9a84;
}

.sheet th {
  text-align: left;
  vertical-align: top;
}

.sheet thead {
  border-bottom: 2px solid #222;
}

.sheet td {
  height: 15px;
  line-height: 14px;
  text-align: right;
  border: 1px solid #a9c3bb;
}

.sheet tr > *:first-child {
  border-left: 0;
}

.sheet tbody td:first-child {
  padding-left: 1px;
  text-align: left;
}

.sheet tfoot td:first-child {
  text-align: left;
}

.sheet tbody td:last-child {
  padding-right: 1px;
}

.sheet .minus {
  color: #d00;
}

/* scrollbars */
.scroll {
  display: flex;
  background: #fbf7ee;
}

.scroll button, .scroll .thumb {
  flex: none;
  border: 1px solid #bdb5a5;
  background: #eee6da;
}

.scroll button {
  display: flex;
  align-items: center;
  justify-content: center;
  width: 11px;
  height: 11px;
}

.scroll svg {
  width: 9px;
  height: 9px;
}

.vertical {
  flex-direction: column;
  align-items: center;
  padding: 1px 0;
  gap: 1px;
}

.horizontal {
  align-items: center;
  padding: 0 1px;
  gap: 1px;
}

.vertical .thumb {
  width: 11px;
}

.horizontal .thumb {
  width: 68%;
  height: 11px;
}

.report-v .thumb {
  height: 64%;
}

.settings-v .thumb {
  height: 47%;
  margin-top: 128px;
}

.vertical .end {
  margin-top: auto;
}

.horizontal .end {
  margin-left: auto;
}

.down svg {
  transform: rotate(180deg);
}

.left svg {
  transform: rotate(-90deg);
}

.right svg {
  transform: rotate(90deg);
}

.corner {
  background: #ddd3c6;
}

/* settings panel */
.settings {
  display: flex;
  flex-direction: column;
  flex: 0 0 43%;
  min-width: 0;
  border: 1px solid #8b8578;
  border-radius: 4px 4px 0 0;
  background: #fffdf6;
}

.settings-head {
  display: flex;
  align-items: center;
  flex: none;
  height: 26px;
  padding: 0 4px 0 8px;
  border-bottom: 1px solid #8b8578;
}

.settings-head h3 {
  flex: 1;
  font-size: 11px;
  font-weight: normal;
}

.blue {
  color: #154ca8;
}

.settings-body {
  display: flex;
  flex: 1;
  min-height: 0;
}

.sections {
  flex: 1;
  min-width: 0;
  overflow: hidden;
}

.settings-v {
  width: 14px;
}

.list-stub {
  height: 34px;
  margin: 0 6px 8px 5px;
  border: 1px solid #8b8578;
  border-top: 0;
  background: #fff;
}

.section-head {
  display: flex;
  align-items: center;
  justify-content: space-between;
  height: 17px;
  padding: 0 4px 0 1px;
  border-top: 1px solid #8b8578;
  border-bottom: 1px solid #8b8578;
  background: #eee5dc;
}

.section-head h4 {
  font-size: 11px;
  font-weight: normal;
}

.section-nav {
  display: flex;
  align-items: center;
  gap: 4px;
  font-size: 12px;
  line-height: 12px;
}

.check-line {
  display: flex;
  align-items: center;
  gap: 3px;
  height: 23px;
  margin: 0 6px 0 5px;
  padding-top: 4px;
  border-bottom: 1px solid #e2dccb;
}

input[type="checkbox"] {
  flex: none;
  width: 13px;
  height: 13px;
  appearance: none;
  border: 1px solid #8b8578;
  background: #fff;
}

input[type="checkbox"]:checked::before {
  content: "";
  display: block;
  width: 7px;
  height: 4px;
  margin: 2px;
  border-left: 2px solid #000;
  border-bottom: 2px solid #000;
  transform: rotate(-45deg);
}

.mini-tools {
  display: flex;
  align-items: center;
  height: 25px;
  padding: 0 6px;
}

.mini-tools.spaced {
  height: 30px;
  padding-top: 4px;
}

.muted {
  color: #9696aa;
}

.navy {
  color: #272b8c;
}

.list {
  height: 84px;
  margin: 0 6px 8px 5px;
  border: 1px solid #8b8578;
  background: #fff;
}

.list table {
  width: 100%;
  table-layout: fixed;
  border-collapse: collapse;
}

.list th, .list td {
  height: 15px;
  padding: 0 1px;
  font-weight: normal;
  line-height: 14px;
  text-align: left;
  white-space: nowrap;
  border-right: 1px solid #8b8578;
  border-bottom: 1px solid #8b8578;
}

.list th {
  background: #fffdf4;
}

.list th:last-child, .list td:last-child {
  border-right: 0;
}

.list .current {
  background: #dbd6ce;
}

.list td {
  height: 16px;
  vertical-align: middle;
}

.list td input {
  display: block;
  margin-left: 1px;
}

.list .selected {
  background: #0a246a;
}

.w-mark { width: 20px; }
.w-84 { width: 84px; }
.w-91 { width: 91px; }
.w-94 { width: 94px; }
.w-100 { width: 100px; }
.w-107 { width: 107px; }
.w-140 { width: 140px; }

/* bottom bars */
.taskbar {
  display: flex;
  flex: none;
  gap: 2px;
  height: 25px;
  padding: 3px 1px 2px;
  border-top: 1px solid #fff;
}

.taskbar button {
  display: flex;
  align-items: center;
  width: 171px;
  padding-left: 2px;
  color: #c4cde6;
  background: #0a246a;
}

.taskbar span {
  overflow: hidden;
}

.taskbar .active {
  color: #fff;
}

.taskbar .inactive {
  color: #d5d3d3;
  background: #878383;
}

.statusbar {
  display: flex;
  flex: none;
  gap: 5px;
  height: 24px;
  padding: 0 1px 4px;
  border-bottom: 2px solid #d0cdc8;
}

.statusbar span {
  display: flex;
  align-items: center;
  border: 1px solid #dcd2c4;
}

.hint {
  flex: 1;
  padding-left: 3px;
}

.key {
  padding: 0 3px;
  font-size: 12px;
}

.off {
  color: #99938a;
}

.marks {
  position: absolute;
  top: 0;
  left: 0;
  pointer-events: none;
  fill: none;
  stroke: #eb0a0e;
  stroke-width: 5;
  stroke-linejoin: round;
}
```
